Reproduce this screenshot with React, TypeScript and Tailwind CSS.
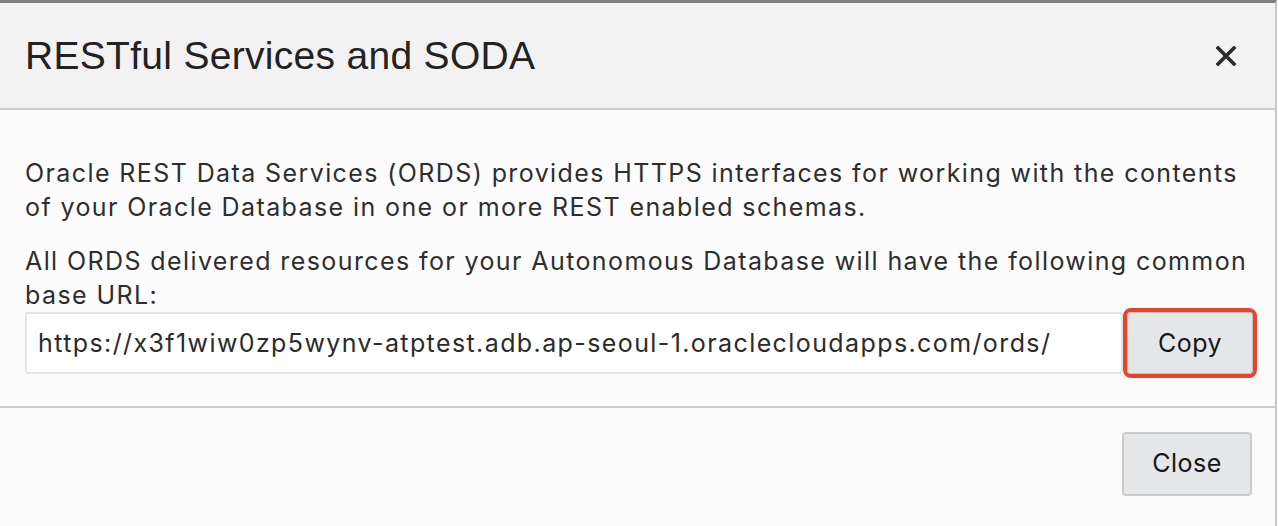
import React from 'react';

const url = 'https://x3f1wiw0zp5wynv-atptest.adb.ap-seoul-1.oraclecloudapps.com/ords/';

const CloseIcon: React.FC = () => (
  <svg width="20" height="20" viewBox="0 0 20 20" className="text-[#2a2a2a]">
    <path d="M2 2 L18 18 M18 2 L2 18" stroke="currentColor" strokeWidth="3.6" strokeLinecap="square" />
  </svg>
);

export default function App() {
  return (
    <div className="h-[526px] w-[1278px] bg-white font-['Inter',sans-serif]">
      <div className="flex h-full w-[1277px] flex-col border-t-[3px] border-r-2 border-t-[#808080] border-r-[#cacaca] bg-[#fcfcfc]">
        <header className="flex h-[107px] shrink-0 items-center justify-between border-b-2 border-[#cccccc] bg-[#f2f2f2] pl-[25px] pr-[35px]">
          <h1 className="font-['Liberation_Sans',Arial,sans-serif] text-[39px] leading-none tracking-[0.3px] text-[#222222]">
            RESTful Services and SODA
          </h1>
          <button className="flex h-[28px] w-[28px] items-center justify-center">
            <CloseIcon />
          </button>
        </header>

        <main className="shrink-0 border-b-2 border-[#cccccc] pb-[32px] pl-[25px] pr-[22px] pt-[46px] text-[25px] leading-[34px] tracking-[1.4px] text-[#2e2e2e]">
          <p>
            Oracle REST Data Services (ORDS) provides HTTPS interfaces for working with the contents of your Oracle
            Database in one or more REST enabled schemas.
          </p>
          <p className="mt-[20px]">
            All ORDS delivered resources for your Autonomous Database will have the following common base URL:
          </p>
          <div className="flex items-center gap-[4px]">
            <div className="flex h-[62px] flex-1 items-center rounded-[3px] border-2 border-[#e3e3e3] bg-white px-[11px] tracking-[1.4px] text-[#2b2b2b]">
              {url}
            </div>
            <button className="h-[62px] w-[126px] rounded-[4px] border border-[#c4c4c4] bg-[#e4e6e8] text-[25px] tracking-[0.5px] text-[#161616] outline-[4px] outline-solid outline-[#e8442c]">
              Copy
            </button>
          </div>
        </main>

        <footer className="flex flex-1 items-start justify-end pr-[23px] pt-[24px]">
          <button className="h-[64px] w-[130px] rounded-[4px] border-2 border-[#cbcbcb] bg-[#e4e6e8] text-[25px] tracking-[0.5px] text-[#161616]">
            Close
          </button>
        </footer>
      </div>
    </div>
  );
}
